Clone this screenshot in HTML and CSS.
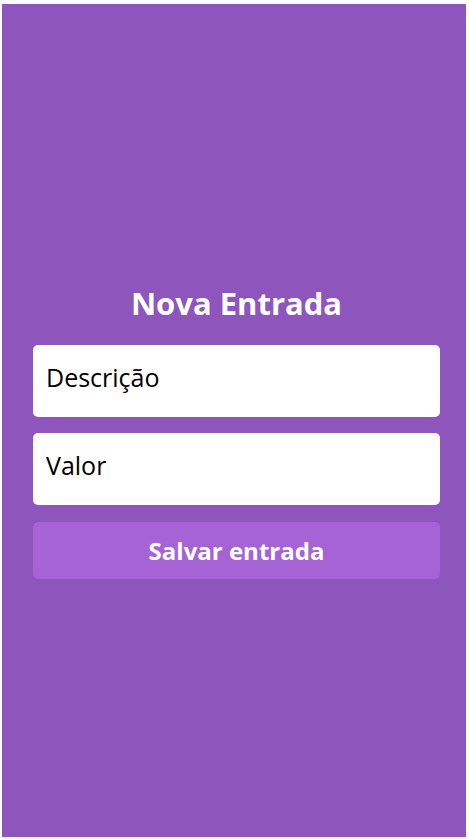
FILE: index.html
```html
<!DOCTYPE html>
<html lang="pt-BR">
<head>
<meta charset="utf-8">
<title>Nova Entrada</title>
<link rel="stylesheet" href="styles.css">
</head>
<body>
<main class="screen">
  <form class="entry-form">
    <h1 class="title">Nova Entrada</h1>
    <input class="field" type="text" placeholder="Descrição">
    <input class="field field-second" type="text" placeholder="Valor">
    <button class="save" type="button">Salvar entrada</button>
  </form>
</main>
</body>
</html>
```
FILE: styles.css
```css
html, body {
  margin: 0;
  padding: 0;
  background: #ffffff;
}
body {
  padding: 4px 3px 2px 2px;
  font-family: "Open Sans", "Lato", sans-serif;
}
.screen {
  height: 833px;
  background: #8e55bd;
  box-sizing: border-box;
  padding: 279px 26px 0 31px;
}
.entry-form {
  display: flex;
  flex-direction: column;
  gap: 17px;
}
.title {
  margin: 0 0 5px;
  color: #ffffff;
  font-size: 31px;
  font-weight: 700;
  line-height: 40px;
  text-align: center;
}
.field {
  height: 72px;
  box-sizing: border-box;
  border: none;
  border-radius: 5px;
  background: #ffffff;
  padding: 0 13px 8px;
  font-family: inherit;
  font-size: 25px;
  color: #000000;
  outline: none;
}
.field-second {
  margin-top: -1px;
}
.field::placeholder {
  color: #000000;
  opacity: 1;
}
.save {
  height: 57px;
  border: none;
  border-radius: 5px;
  background: #a563d6;
  color: #ffffff;
  font-family: inherit;
  font-size: 24px;
  font-weight: 700;
  cursor: pointer;
}
```
